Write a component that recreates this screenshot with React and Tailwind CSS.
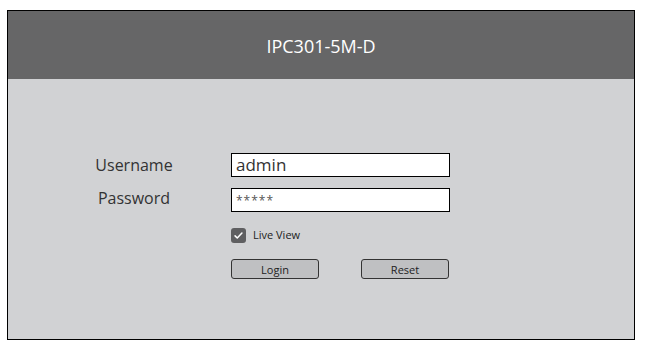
import React, { useState } from "react";

const CheckIcon = () => (
  <svg viewBox="0 0 16 16" className="h-[11px] w-[11px]" fill="none" stroke="white" strokeWidth={2.2} strokeLinecap="round" strokeLinejoin="round">
    <path d="M3 8.5l3.2 3.2L13 4.5" />
  </svg>
);

function App() {
  const [user, setUser] = useState("admin");
  const [pass, setPass] = useState("*****");
  const [live, setLive] = useState(true);

  return (
    <div className="w-[647px] h-[353px] bg-white pt-[10px] pl-[7px]" style={{ fontFamily: "'Open Sans', 'Noto Sans', sans-serif" }}>
      <div className="w-[628px] h-[330px] border border-black flex flex-col">
        <div className="h-[68px] bg-[#666667] flex items-center justify-center text-white text-[18px] pt-[2px]">
          IPC301-5M-D
        </div>
        <div className="flex-1 bg-[#d1d2d4] pt-[74px]">
          <div className="flex items-center h-[24px]">
            <div className="w-[100px] ml-[76px] text-center text-[16px] text-[#333] leading-none pb-[1px]">Username</div>
            <input
              value={user}
              onChange={(e) => setUser(e.target.value)}
              className="ml-[47px] w-[219px] h-[24px] border border-black bg-white px-[4px] text-[17px] text-[#333] outline-none"
            />
          </div>
          <div className="flex items-center h-[24px] mt-[11px]">
            <div className="w-[100px] ml-[76px] text-center text-[16px] text-[#333] leading-none pb-[4px]">Password</div>
            <input
              value={pass}
              onChange={(e) => setPass(e.target.value)}
              className="ml-[47px] w-[219px] h-[24px] border border-black bg-white px-[4px] text-[12px] tracking-[1px] text-[#555] outline-none"
            />
          </div>
          <div className="flex items-center ml-[223px] mt-[16px] h-[15px]">
            <button
              onClick={() => setLive(!live)}
              className="w-[15px] h-[15px] rounded-[3px] bg-[#5f5f61] flex items-center justify-center"
            >
              {live && <CheckIcon />}
            </button>
            <span className="ml-[7px] text-[11px] text-[#222]">Live View</span>
          </div>
          <div className="flex ml-[223px] mt-[16px]">
            <button className="w-[88px] h-[20px] border border-[#333] rounded-[3px] bg-[#bfc0c2] text-[11px] text-[#222] leading-none">
              Login
            </button>
            <button className="ml-[42px] w-[88px] h-[20px] border border-[#333] rounded-[3px] bg-[#bfc0c2] text-[11px] text-[#222] leading-none">
              Reset
            </button>
          </div>
        </div>
      </div>
    </div>
  );
}

export default App;
